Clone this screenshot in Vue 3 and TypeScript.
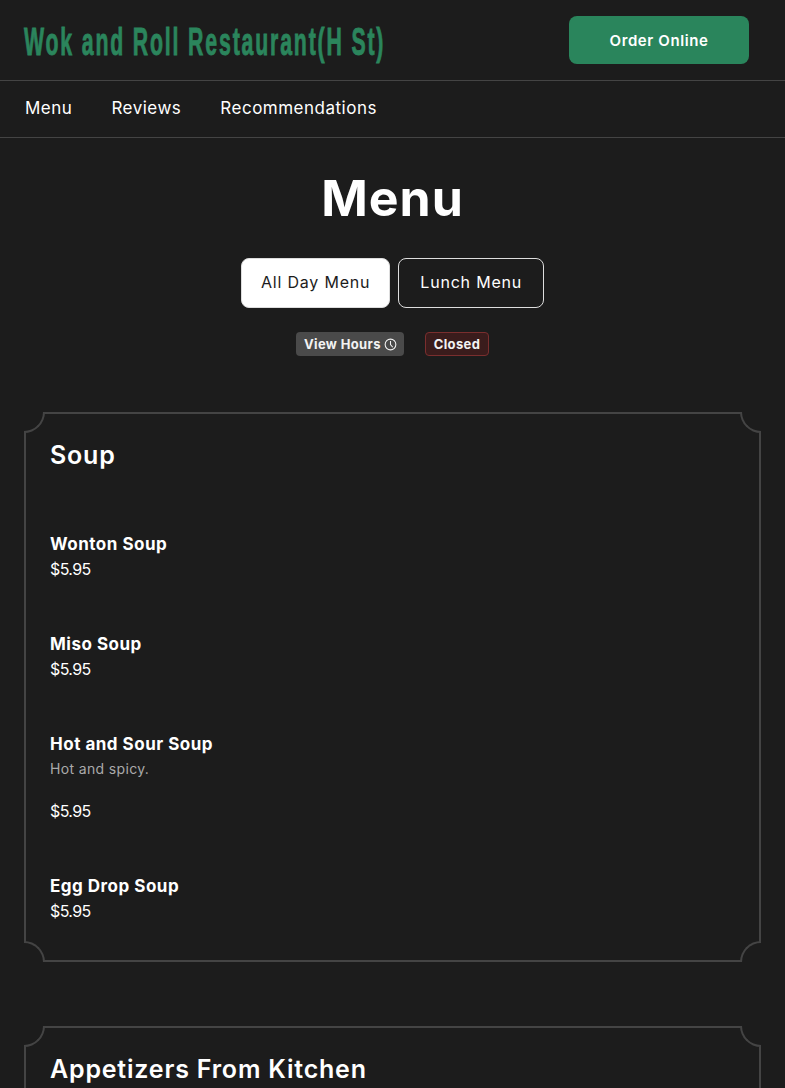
<template>
  <div class="page">
    <header class="top-bar">
      <h1 class="brand"><span>Wok and Roll Restaurant(H St)</span></h1>
      <button type="button" class="order-btn">Order Online</button>
    </header>

    <nav class="main-nav">
      <a v-for="link in links" :key="link" class="nav-link">{{ link }}</a>
    </nav>

    <main class="content">
      <h2 class="page-title">Menu</h2>

      <div class="tabs">
        <button
          v-for="tab in tabs"
          :key="tab"
          type="button"
          class="tab"
          :class="{ active: tab === activeTab }"
          @click="activeTab = tab"
        >
          {{ tab }}
        </button>
      </div>

      <div class="status-row">
        <span class="hours-badge">
          View Hours
          <svg class="clock" viewBox="0 0 16 16" width="13" height="13" fill="none" stroke="currentColor" stroke-width="1.3">
            <circle cx="8" cy="8" r="6.6" />
            <path d="M8 3.8V8l2.8 3.4" />
          </svg>
        </span>
        <span class="closed-badge">Closed</span>
      </div>

      <section v-for="section in sections" :key="section.name" class="menu-card">
        <i class="corner tl"></i>
        <i class="corner tr"></i>
        <i class="corner bl"></i>
        <i class="corner br"></i>
        <h3 class="section-name">{{ section.name }}</h3>
        <div v-if="section.items.length" class="items">
          <article v-for="item in section.items" :key="item.name" class="item">
            <div class="item-name">{{ item.name }}</div>
            <p v-if="item.description" class="item-desc">{{ item.description }}</p>
            <div class="item-price">{{ item.price }}</div>
          </article>
        </div>
      </section>
    </main>
  </div>
</template>

<script setup lang="ts">
import { ref } from 'vue'

interface MenuItem {
  name: string
  description?: string
  price: string
}

interface MenuSection {
  name: string
  items: MenuItem[]
}

const links = ['Menu', 'Reviews', 'Recommendations']
const tabs = ['All Day Menu', 'Lunch Menu']
const activeTab = ref('All Day Menu')

const sections: MenuSection[] = [
  {
    name: 'Soup',
    items: [
      { name: 'Wonton Soup', price: '$5.95' },
      { name: 'Miso Soup', price: '$5.95' },
      { name: 'Hot and Sour Soup', description: 'Hot and spicy.', price: '$5.95' },
      { name: 'Egg Drop Soup', price: '$5.95' }
    ]
  },
  { name: 'Appetizers From Kitchen', items: [] }
]
</script>

<style>
html,
body {
  background: #1c1c1c;
  overflow: hidden;
}
</style>

<style scoped>
.page {
  height: 1088px;
  overflow: hidden;
  background: #1c1c1c;
  color: #fff;
  font-family: Inter, "Liberation Sans", sans-serif;
}

.top-bar {
  height: 80px;
  box-sizing: border-box;
  padding: 16px 36px 16px 24px;
  display: flex;
  align-items: center;
  justify-content: space-between;
}

.brand {
  margin: 0;
  width: 360px;
  height: 48px;
  line-height: 52px;
  font-family: "Liberation Sans", sans-serif;
  font-size: 38px;
  font-weight: 700;
  color: #2b855c;
  white-space: nowrap;
}

.brand span {
  display: inline-block;
  transform: scaleX(0.56);
  transform-origin: left center;
  letter-spacing: 3.27px;
  -webkit-text-stroke: 0.9px #2b855c;
}

.order-btn {
  width: 180px;
  height: 48px;
  border: none;
  border-radius: 8px;
  background: #2a855c;
  color: #fff;
  font-family: inherit;
  font-size: 15px;
  font-weight: 600;
  letter-spacing: 0.6px;
}

.main-nav {
  border-top: 1px solid #444;
  border-bottom: 1px solid #444;
  padding: 0 25px 2px;
  height: 54px;
  display: flex;
  align-items: center;
  gap: 39px;
  font-size: 17px;
}

.nav-link {
  letter-spacing: 0.5px;
}

.content {
  padding: 0 24px;
}

.page-title {
  margin: 31px 0 0;
  text-align: center;
  font-size: 50px;
  line-height: 58px;
  font-weight: 700;
  letter-spacing: 1px;
}

.tabs {
  margin-top: 31px;
  display: flex;
  justify-content: center;
  gap: 8px;
}

.tab {
  height: 50px;
  padding: 0 19px 2px;
  border: 1px solid #ddd;
  border-radius: 8px;
  background: transparent;
  color: #fff;
  font-family: inherit;
  font-size: 16px;
  letter-spacing: 0.8px;
}

.tab + .tab {
  padding: 0 21px 2px;
}

.tab.active {
  background: #fff;
  color: #1c1c1c;
}

.status-row {
  margin-top: 24px;
  display: flex;
  justify-content: center;
  gap: 21px;
}

.hours-badge,
.closed-badge {
  height: 24px;
  box-sizing: border-box;
  border-radius: 4px;
  display: inline-flex;
  align-items: center;
  font-size: 13px;
  font-weight: 700;
  letter-spacing: 0.35px;
}

.hours-badge {
  width: 108px;
  padding-left: 8px;
  gap: 3px;
  background: #4a4a4a;
  color: #f2f2f2;
  white-space: nowrap;
}

.clock {
  flex-shrink: 0;
}

.closed-badge {
  width: 64px;
  justify-content: center;
  border: 1px solid #7a2e2e;
  background: #3a1c1c;
  color: #f2f2f2;
}

.menu-card {
  position: relative;
  margin-top: 56px;
  padding: 26px 24px 36px;
  border: 2px solid #444;
}

.menu-card + .menu-card {
  margin-top: 64px;
}

.corner {
  position: absolute;
  width: 19px;
  height: 19px;
  background: #1c1c1c;
  border: 0 solid #444;
}

.tl {
  top: -2px;
  left: -2px;
  border-right-width: 2px;
  border-bottom-width: 2px;
  border-bottom-right-radius: 100%;
}

.tr {
  top: -2px;
  right: -2px;
  border-left-width: 2px;
  border-bottom-width: 2px;
  border-bottom-left-radius: 100%;
}

.bl {
  bottom: -2px;
  left: -2px;
  border-right-width: 2px;
  border-top-width: 2px;
  border-top-right-radius: 100%;
}

.br {
  bottom: -2px;
  right: -2px;
  border-left-width: 2px;
  border-top-width: 2px;
  border-top-left-radius: 100%;
}

.section-name {
  margin: 0;
  font-size: 25px;
  line-height: 30px;
  font-weight: 600;
  letter-spacing: 0.8px;
}

.items {
  margin-top: 60px;
  display: flex;
  flex-direction: column;
  gap: 48px;
}

.item-name {
  padding-top: 2px;
  font-size: 17px;
  line-height: 24px;
  font-weight: 700;
  letter-spacing: 0.5px;
}

.item-desc {
  margin: 0 0 16px;
  font-size: 14px;
  line-height: 26px;
  color: #aaa;
  letter-spacing: 0.35px;
}

.item-price {
  font-size: 16px;
  line-height: 26px;
  letter-spacing: -0.6px;
}
</style>
